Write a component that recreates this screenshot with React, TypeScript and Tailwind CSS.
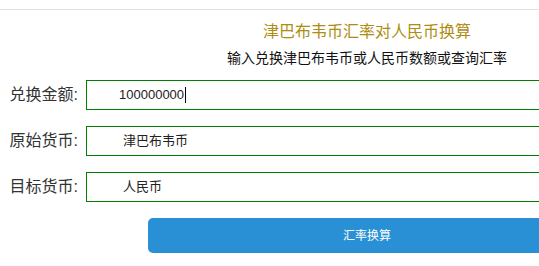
export default function App() {
  const rows = [
    { label: "兑换金额:", value: "100000000", caret: true, pad: "pl-[32px]" },
    { label: "原始货币:", value: "津巴布韦币", caret: false, pad: "pl-[36px]" },
    { label: "目标货币:", value: "人民币", caret: false, pad: "pl-[36px]" },
  ]

  return (
    <div className="w-[539px] h-[266px] overflow-hidden bg-white font-['Liberation_Sans','Noto_Sans_CJK_SC',sans-serif]">
      <div className="h-[10px] border-b border-[#e3e3e3]" />
      <div className="w-[734px]">
        <div className="mt-[10px] text-center text-[16px] leading-[24px] text-[#ad8d12]">
          津巴布韦币汇率对人民币换算
        </div>
        <div className="mt-[4px] text-center text-[14px] leading-[20px] text-[#111]">
          输入兑换津巴布韦币或人民币数额或查询汇率
        </div>

        <div className="mt-[12px] flex flex-col gap-[16px]">
          {rows.map((row) => (
            <div key={row.label} className="flex items-center h-[30px]">
              <div className="w-[86px] pr-[8px] text-right text-[16px] text-[#333]">{row.label}</div>
              <div className={`flex items-center w-[600px] h-[30px] border border-[#008000] text-[13px] text-[#222] ${row.pad}`}>
                <span>{row.value}</span>
                {row.caret && <span className="ml-[1px] inline-block w-[1px] h-[16px] bg-black" />}
              </div>
            </div>
          ))}
        </div>

        <button className="mt-[16px] ml-[148px] w-[438px] h-[35px] rounded-[5px] bg-[#2a90d6] text-white text-[12px]">
          汇率换算
        </button>
      </div>
    </div>
  )
}
